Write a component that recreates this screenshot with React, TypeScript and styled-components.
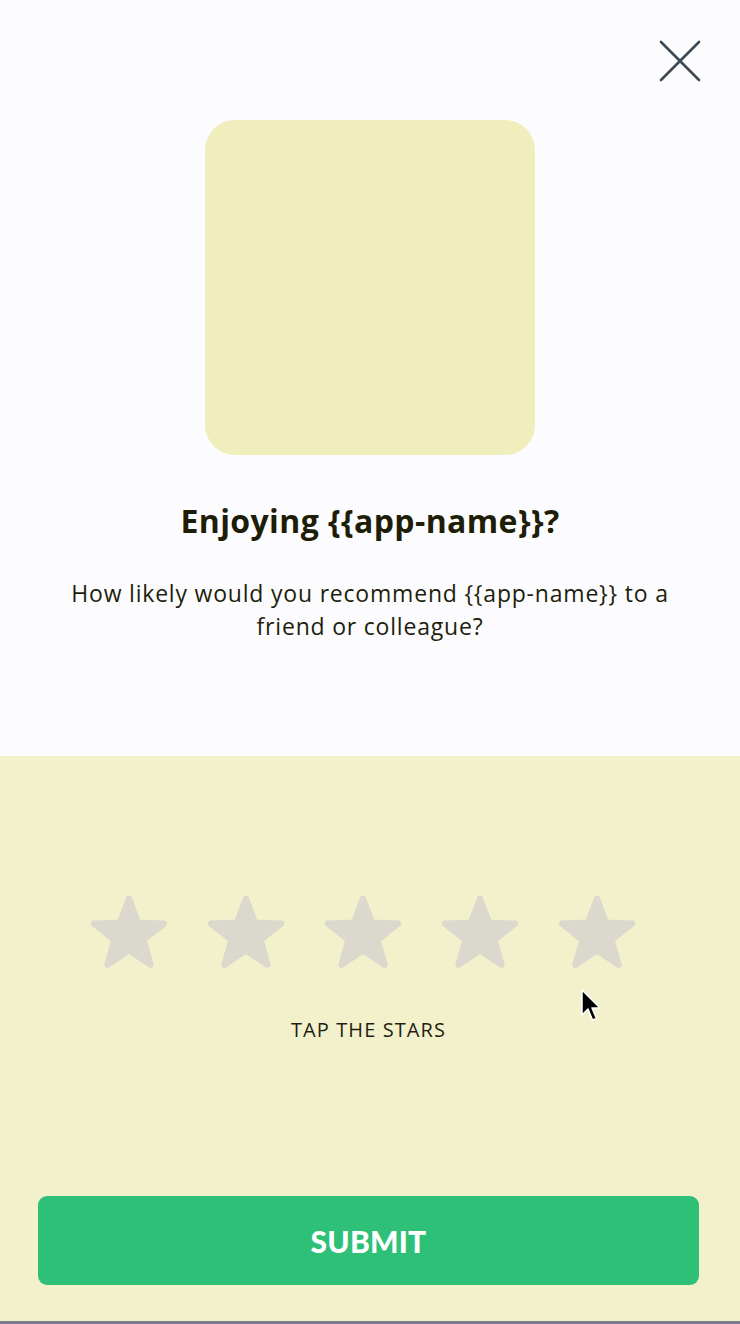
import React from "react";
import styled, { createGlobalStyle } from "styled-components";

const Global = createGlobalStyle`
  html, body { margin: 0; padding: 0; }
  body { background: #fcfcfe; font-family: "Open Sans", "Noto Sans", sans-serif; }
  * { box-sizing: border-box; }
`;

const Screen = styled.div`
  width: 740px;
  height: 1324px;
  display: flex;
  flex-direction: column;
  overflow: hidden;
`;

const Top = styled.section`
  height: 756px;
  background: #fcfcfe;
  display: flex;
  flex-direction: column;
  align-items: center;
`;

const HeaderRow = styled.div`
  align-self: stretch;
  display: flex;
  justify-content: flex-end;
  padding: 40px 39px 0 0;
  height: 82px;
`;

const CloseButton = styled.button`
  width: 42px;
  height: 42px;
  padding: 0;
  border: none;
  background: transparent;
  display: flex;
  cursor: pointer;
`;

const AppIcon = styled.div`
  margin-top: 38px;
  width: 330px;
  height: 335px;
  border-radius: 30px;
  background: #f0eebd;
`;

const Title = styled.h1`
  margin: 46px 0 0;
  font-size: 32px;
  line-height: 40px;
  font-weight: 700;
  letter-spacing: 0.4px;
  color: #1e1e08;
  text-align: center;
`;

const Subtitle = styled.p`
  margin: 36px 0 0;
  width: 624px;
  font-size: 23px;
  line-height: 33px;
  font-weight: 400;
  letter-spacing: 0.8px;
  color: #1e1e0c;
  text-align: center;
`;

const Bottom = styled.section`
  position: relative;
  flex: 1;
  background: #f3f1cb;
  border-bottom: 3px solid #7b7b8a;
  display: flex;
  flex-direction: column;
  align-items: center;
  padding: 140px 41px 36px 38px;
`;

const Stars = styled.div`
  display: flex;
  gap: 41px;
  padding-right: 11px;
`;

const StarButton = styled.button`
  width: 76px;
  height: 72px;
  padding: 0;
  border: none;
  background: transparent;
  display: flex;
  cursor: pointer;
  svg { overflow: visible; }
`;

const Hint = styled.div`
  margin-top: 50px;
  font-size: 20px;
  line-height: 24px;
  letter-spacing: 1.1px;
  color: #1f1f14;
`;

const Spacer = styled.div`
  flex: 1;
`;

const Submit = styled.button`
  align-self: stretch;
  height: 89px;
  border: none;
  border-radius: 9px;
  background: #2ec077;
  color: #ffffff;
  font-family: Lato, "Noto Sans", sans-serif;
  font-size: 30px;
  font-weight: 900;
  letter-spacing: 0.2px;
  cursor: pointer;
`;

const Cursor = styled.svg`
  position: absolute;
  left: 580px;
  top: 233px;
`;

const Star = () => (
  <svg width="76" height="72" viewBox="0 0 76 72">
    <polygon
      points="38,2.5 47.1,26.5 73.2,27.6 52.7,43.8 59.7,68.9 38,54.5 16.3,68.9 23.3,43.8 2.8,27.6 28.9,26.5"
      fill="#dbd9cd"
      stroke="#dbd9cd"
      strokeWidth="6"
      strokeLinejoin="round"
    />
  </svg>
);

const TITLE = "Enjoying {{app-name}}?";
const SUBTITLE = "How likely would you recommend {{app-name}} to a friend or colleague?";

export default function App() {
  return (
    <>
      <Global />
      <Screen>
        <Top>
          <HeaderRow>
            <CloseButton aria-label="Close">
              <svg width="42" height="42" viewBox="0 0 42 42">
                <path d="M2 2 L40 40 M40 2 L2 40" stroke="#3b4752" strokeWidth="2.6" strokeLinecap="round" />
              </svg>
            </CloseButton>
          </HeaderRow>
          <AppIcon />
          <Title>{TITLE}</Title>
          <Subtitle>{SUBTITLE}</Subtitle>
        </Top>
        <Bottom>
          <Stars>
            {[1, 2, 3, 4, 5].map((n) => (
              <StarButton key={n} aria-label={`${n} stars`}>
                <Star />
              </StarButton>
            ))}
          </Stars>
          <Hint>TAP THE STARS</Hint>
          <Spacer />
          <Submit>SUBMIT</Submit>
          <Cursor width="22" height="34" viewBox="0 0 22 34">
            <path d="M2 1 L2 26 L8 20 L12.5 31 L16.5 29.5 L12 19 L20 19 Z" fill="#000" stroke="#fff" strokeWidth="1.5" strokeLinejoin="round" />
          </Cursor>
        </Bottom>
      </Screen>
    </>
  );
}
